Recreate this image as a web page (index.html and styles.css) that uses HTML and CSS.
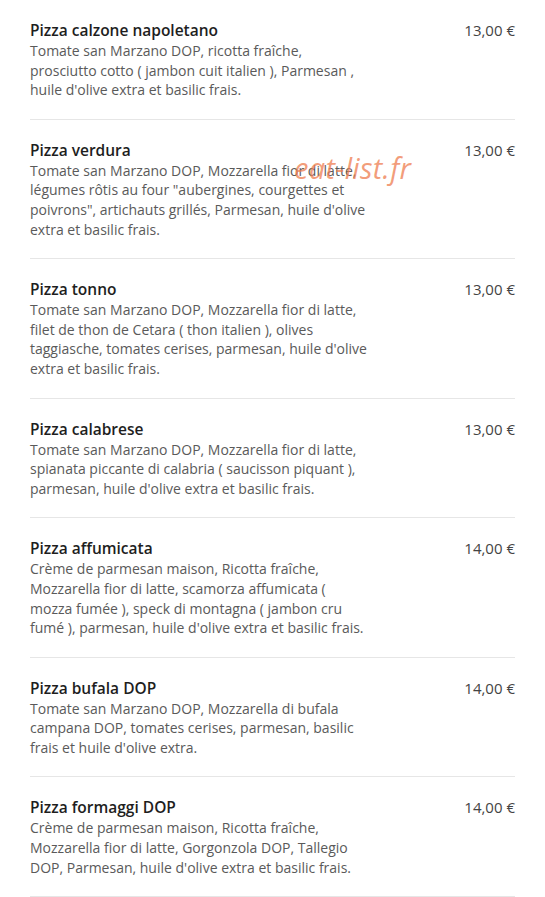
FILE: index.html
```html
<!DOCTYPE html>
<html lang="fr">
<head>
  <meta charset="UTF-8">
  <meta name="viewport" content="width=device-width, initial-scale=1.0">
  <title>Pizzas - Carte</title>
  <link rel="stylesheet" href="styles.css">
</head>
<body>
  <div class="menu">
    <div class="item">
      <div class="info">
        <h3>Pizza calzone napoletano</h3>
        <p>Tomate san Marzano DOP, ricotta fraîche, prosciutto cotto ( jambon cuit italien ), Parmesan , huile d'olive extra et basilic frais.</p>
      </div>
      <span class="price">13,00 €</span>
    </div>
    <div class="item">
      <div class="info">
        <h3>Pizza verdura</h3>
        <p>Tomate san Marzano DOP, Mozzarella fior di latte, légumes rôtis au four "aubergines, courgettes et poivrons", artichauts grillés, Parmesan, huile d'olive extra et basilic frais.</p>
      </div>
      <span class="price">13,00 €</span>
    </div>
    <div class="item">
      <div class="info">
        <h3>Pizza tonno</h3>
        <p>Tomate san Marzano DOP, Mozzarella fior di latte, filet de thon de Cetara ( thon italien ), olives taggiasche, tomates cerises, parmesan, huile d'olive extra et basilic frais.</p>
      </div>
      <span class="price">13,00 €</span>
    </div>
    <div class="item">
      <div class="info">
        <h3>Pizza calabrese</h3>
        <p>Tomate san Marzano DOP, Mozzarella fior di latte, spianata piccante di calabria ( saucisson piquant ), parmesan, huile d'olive extra et basilic frais.</p>
      </div>
      <span class="price">13,00 €</span>
    </div>
    <div class="item">
      <div class="info">
        <h3>Pizza affumicata</h3>
        <p>Crème de parmesan maison, Ricotta fraîche, Mozzarella fior di latte, scamorza affumicata ( mozza fumée ), speck di montagna ( jambon cru fumé ), parmesan, huile d'olive extra et basilic frais.</p>
      </div>
      <span class="price">14,00 €</span>
    </div>
    <div class="item">
      <div class="info">
        <h3>Pizza bufala DOP</h3>
        <p>Tomate san Marzano DOP, Mozzarella di bufala campana DOP, tomates cerises, parmesan, basilic frais et huile d'olive extra.</p>
      </div>
      <span class="price">14,00 €</span>
    </div>
    <div class="item">
      <div class="info">
        <h3>Pizza formaggi DOP</h3>
        <p>Crème de parmesan maison, Ricotta fraîche, Mozzarella fior di latte, Gorgonzola DOP, Tallegio DOP, Parmesan, huile d'olive extra et basilic frais.</p>
      </div>
      <span class="price">14,00 €</span>
    </div>
  </div>
  <div class="watermark">eat-list.fr</div>
</body>
</html>
```

FILE: styles.css
```css
body {
  margin: 0;
  background: #ffffff;
  font-family: "Open Sans", "Liberation Sans", sans-serif;
  color: #555;
}
.menu {
  padding: 0 30px;
}
.item {
  display: flex;
  justify-content: space-between;
  align-items: flex-start;
  padding: 20px 0 19px;
  border-bottom: 1px solid #e6e6e6;
}
.info { width: 338px; }
.info h3 {
  margin: 0;
  font-size: 15.5px;
  line-height: 21px;
  font-weight: 600;
  color: #1e1e1e;
}
.info p {
  margin: 0;
  font-size: 14px;
  line-height: 19.6px;
  color: #5a5a5a;
}
.price {
  font-size: 15px;
  line-height: 21px;
  color: #444;
}
.watermark {
  position: absolute;
  left: 294px;
  top: 148px;
  font-size: 29px;
  font-style: italic;
  color: rgba(238, 125, 80, 0.75);
  letter-spacing: 0.3px;
}
```
